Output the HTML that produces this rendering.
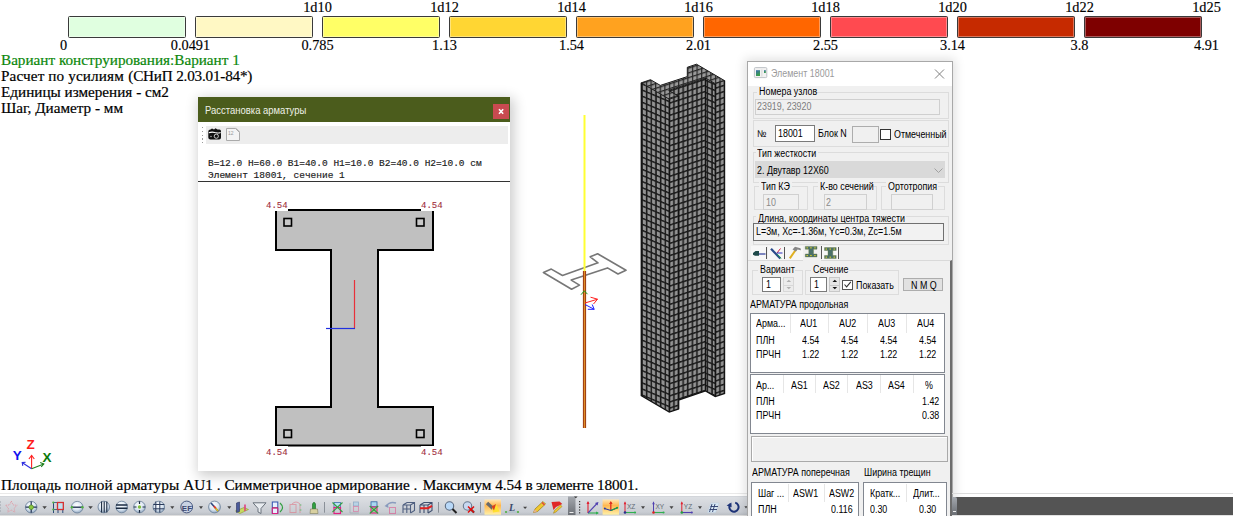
<!DOCTYPE html>
<html><head><meta charset="utf-8">
<style>
html,body{margin:0;padding:0;}
body{width:1233px;height:516px;overflow:hidden;background:#fff;position:relative;font-family:"Liberation Sans",sans-serif;}
.a{position:absolute;white-space:nowrap;}
.sr{font-family:"Liberation Serif",serif;font-size:15.2px;line-height:16px;color:#000;-webkit-text-stroke:0.2px currentColor;}
.lg{font-family:"Liberation Serif",serif;font-size:14.3px;line-height:14px;color:#000;-webkit-text-stroke:0.15px #000;}
.bx{position:absolute;top:16px;width:116px;height:20px;border:1px solid #3a3a3a;border-radius:1.5px;box-shadow:inset 0 0 0 1px rgba(255,255,255,.35);}
.ui{font-family:"Liberation Sans",sans-serif;font-size:10px;line-height:11px;color:#000;transform-origin:0 0;transform:scaleX(.89);margin-top:.5px;}
.mono{font-family:"Liberation Mono",monospace;font-weight:normal;font-size:9.5px;line-height:10px;color:#1a1a1a;-webkit-text-stroke:0.15px #1a1a1a;}
</style></head><body>

<!-- legend -->
<div class="bx" style="left:68px;background:#e0ffe0"></div>
<div class="bx" style="left:195px;background:#fff8c4"></div>
<div class="bx" style="left:322px;background:#ffff66"></div>
<div class="bx" style="left:449px;background:#ffd633"></div>
<div class="bx" style="left:576px;background:#ffa21f"></div>
<div class="bx" style="left:703px;background:#ff6600"></div>
<div class="bx" style="left:830px;background:#ff4a50"></div>
<div class="bx" style="left:957px;background:#c62a00"></div>
<div class="bx" style="left:1084px;background:#7e0000"></div>

<div class="a lg" style="left:317.5px;top:-0.5px;transform:translateX(-50%)">1d10</div>
<div class="a lg" style="left:444.5px;top:-0.5px;transform:translateX(-50%)">1d12</div>
<div class="a lg" style="left:571.5px;top:-0.5px;transform:translateX(-50%)">1d14</div>
<div class="a lg" style="left:698.5px;top:-0.5px;transform:translateX(-50%)">1d16</div>
<div class="a lg" style="left:825.5px;top:-0.5px;transform:translateX(-50%)">1d18</div>
<div class="a lg" style="left:952.5px;top:-0.5px;transform:translateX(-50%)">1d20</div>
<div class="a lg" style="left:1079.5px;top:-0.5px;transform:translateX(-50%)">1d22</div>
<div class="a lg" style="left:1206.5px;top:-0.5px;transform:translateX(-50%)">1d25</div>

<div class="a lg" style="left:63.5px;top:38.3px;transform:translateX(-50%)">0</div>
<div class="a lg" style="left:190.5px;top:38.3px;transform:translateX(-50%)">0.0491</div>
<div class="a lg" style="left:317.5px;top:38.3px;transform:translateX(-50%)">0.785</div>
<div class="a lg" style="left:444.5px;top:38.3px;transform:translateX(-50%)">1.13</div>
<div class="a lg" style="left:571.5px;top:38.3px;transform:translateX(-50%)">1.54</div>
<div class="a lg" style="left:698.5px;top:38.3px;transform:translateX(-50%)">2.01</div>
<div class="a lg" style="left:825.5px;top:38.3px;transform:translateX(-50%)">2.55</div>
<div class="a lg" style="left:952.5px;top:38.3px;transform:translateX(-50%)">3.14</div>
<div class="a lg" style="left:1079.5px;top:38.3px;transform:translateX(-50%)">3.8</div>
<div class="a lg" style="left:1206.5px;top:38.3px;transform:translateX(-50%)">4.91</div>

<div class="a sr" style="left:1px;top:51.5px;color:#0a870a">Вариант конструирования:Вариант 1</div>
<div class="a sr" style="left:1px;top:67.5px;letter-spacing:0.13px">Расчет по усилиям</div>
<div class="a sr" style="left:128.3px;top:67.5px;letter-spacing:-0.2px">(СНиП 2.03.01-84*)</div>
<div class="a sr" style="left:1px;top:83.5px">Единицы измерения - см2</div>
<div class="a sr" style="left:1px;top:99.5px">Шаг, Диаметр - мм</div>

<div class="a sr" style="left:1px;top:476.6px;font-size:15.27px;letter-spacing:0.08px">Площадь полной арматуры</div>
<div class="a sr" style="left:183.3px;top:476.6px;font-size:15.27px">AU1 . Симметричное</div>
<div class="a sr" style="left:325.5px;top:476.6px;font-size:15.27px">армирование .</div>
<div class="a sr" style="left:422.8px;top:476.6px;font-size:15.27px;letter-spacing:-0.06px">Максимум 4.54 в</div>
<div class="a sr" style="left:536px;top:476.6px;font-size:15.27px;letter-spacing:-0.16px">элементе 18001.</div>


<!-- 3D view -->
<svg class="a" style="left:0;top:0" width="1233" height="516" viewBox="0 0 1233 516">
 <defs>
  <pattern id="pA" patternUnits="userSpaceOnUse" width="4.67" height="6.1" patternTransform="translate(641.3,82.8) skewY(23)">
   <rect width="4.67" height="6.1" fill="#939393"/>
   <rect width="4.67" height="1.6" fill="#1a1a1a"/>
   <rect width="1.45" height="6.1" fill="#1a1a1a"/>
   <rect x="3.8" y="1.6" width="0.87" height="4.5" fill="#808080"/>
  </pattern>
  <pattern id="pC" patternUnits="userSpaceOnUse" width="4.6" height="6.1" patternTransform="translate(668.7,90.4) skewY(-18)">
   <rect width="4.6" height="6.1" fill="#939393"/>
   <rect width="4.6" height="1.6" fill="#1a1a1a"/>
   <rect width="1.45" height="6.1" fill="#1a1a1a"/>
   <rect x="3.7" y="1.6" width="0.9" height="4.5" fill="#808080"/>
  </pattern>
  <pattern id="pT" patternUnits="userSpaceOnUse" width="4.6" height="4.8" patternTransform="translate(641.3,82.8) skewY(-18)">
   <rect width="4.6" height="4.8" fill="#9a9a9a"/>
   <rect width="4.6" height="1.3" fill="#262626"/>
   <rect width="1.2" height="4.8" fill="#262626"/>
  </pattern>
 </defs>
 <polygon points="668.7,90.4 705.5,78.0 705.5,390.9 668.7,403.3" fill="url(#pC)"/>
 <polygon points="705.5,78.0 715.3,83.7 715.3,396.6 705.5,390.9" fill="url(#pA)"/>
 <polygon points="715.3,83.7 724.5,80.6 724.5,393.5 715.3,396.6" fill="url(#pC)"/>
 <polygon points="669.3,99.2 678.5,96.1 678.5,409.0 669.3,412.1" fill="url(#pC)"/>
 <polygon points="641.3,82.8 669.3,99.2 669.3,412.1 641.3,395.7" fill="url(#pA)"/>
 <polygon points="641.3,82.8 669.3,99.2 678.5,96.1 668.7,90.4 705.5,78.0 715.3,83.7 724.5,80.6 696.5,64.2 687.3,67.3 687.3,76.6 660.3,85.4 650.5,79.7" fill="url(#pT)" stroke="#1c1c1c" stroke-width="1"/>
 <g stroke="#141414" stroke-width="1.4" fill="none">
  <polyline points="641.3,82.8 641.3,395.7 669.3,412.1 678.5,409 678.5,400.0 705.5,390.9 715.3,396.6 724.5,393.5 724.5,80.6"/>
  <line x1="669.3" y1="99.2" x2="669.3" y2="412.1"/>
  <line x1="678.5" y1="96.1" x2="678.5" y2="409"/>
  <line x1="705.5" y1="78" x2="705.5" y2="390.9"/>
  <line x1="715.3" y1="83.7" x2="715.3" y2="396.6"/>
 </g>

 <!-- gray I outline -->
 <polygon points="543.4,272.5 551.3,269.1 562.5,275.5 598,262.8 590.2,256.8 597.6,253.7 626,270.3 618,274 607.5,267.9 571.2,280.1 579.5,285.1 571.6,289.2" fill="none" stroke="#777" stroke-width="1.6" stroke-linejoin="round"/>
 <!-- vertical element line -->
 <line x1="584.5" y1="115" x2="584.5" y2="272" stroke="#ffff33" stroke-width="2"/>
 <line x1="584.5" y1="271" x2="584.5" y2="428" stroke="#9c3a12" stroke-width="3.2"/>
 <line x1="584.5" y1="271" x2="584.5" y2="428" stroke="#e0902a" stroke-width="1.2"/>
 <!-- local axes -->
 <polyline points="581,294.7 584.3,290.8 587.5,294.2" fill="none" stroke="#1a9a1a" stroke-width="1"/>
 <line x1="585" y1="303" x2="597.5" y2="299.2" stroke="#ff2020" stroke-width="1"/>
 <polyline points="590.5,297.2 597.5,299.2 593.5,304" fill="none" stroke="#ff2020" stroke-width="1"/>
 <line x1="585" y1="304.5" x2="594.2" y2="309.3" stroke="#2020ff" stroke-width="1"/>
 <polyline points="587.8,309.3 594.2,309.3 592.2,304.5" fill="none" stroke="#2020ff" stroke-width="1"/>

 <!-- global axes icon -->
 <line x1="31.6" y1="468.8" x2="31.6" y2="455.5" stroke="#ff2020" stroke-width="1.1"/>
 <polyline points="28.9,459 31.6,455.4 34.3,459" fill="none" stroke="#ff2020" stroke-width="1.1"/>
 <line x1="31.6" y1="468.8" x2="22.4" y2="462.7" stroke="#3030e0" stroke-width="1.1"/>
 <polyline points="22.8,465.8 22.2,462.6 25.6,462.3" fill="none" stroke="#3030e0" stroke-width="1.1"/>
 <line x1="31.6" y1="468.8" x2="43.8" y2="464" stroke="#208020" stroke-width="1.1"/>
 <polyline points="40.2,462.4 43.8,464 41.2,466.8" fill="none" stroke="#208020" stroke-width="1.1"/>
</svg>
<div class="a" style="left:26.5px;top:437.6px;font:bold 13.5px/14px 'Liberation Sans',sans-serif;color:#ff1a1a">Z</div>
<div class="a" style="left:12.8px;top:448.6px;font:bold 13.5px/14px 'Liberation Sans',sans-serif;color:#1010ee">Y</div>
<div class="a" style="left:42.5px;top:450.6px;font:bold 13.5px/14px 'Liberation Sans',sans-serif;color:#0b7a0b">X</div>

<!-- DIALOG -->
<div id="dlg" class="a" style="left:198px;top:97px;width:312px;height:374px;background:#fff;box-shadow:2px 3px 12px 2px rgba(0,0,0,.2);"></div>
<div class="a" style="left:198px;top:97px;width:312px;height:25px;background:#4b5c1c"></div>
<div class="a ui" style="left:205px;top:104.1px;color:#eef0e6;font-size:10.3px;transform:scaleX(.92)">Расстановка арматуры</div>
<div class="a" style="left:493.3px;top:104px;width:15.4px;height:15px;background:#c94a50"></div>
<svg class="a" style="left:493px;top:104px" width="16" height="15" viewBox="0 0 16 15"><path d="M6 5.3 L10.2 9.8 M10.2 5.3 L6 9.8" stroke="#fff" stroke-width="1.6"/></svg>
<div class="a" style="left:205.5px;top:125.5px;width:302.5px;height:18.3px;background:#ededed"></div>

<div class="a mono" style="left:208px;top:158.8px">B=12.0 H=60.0 B1=40.0 H1=10.0 B2=40.0 H2=10.0 см</div>
<div class="a mono" style="left:208px;top:170.8px">Элемент 18001, сечение 1</div>
<div class="a" style="left:198px;top:180.5px;width:312px;height:1.5px;background:#333"></div>


<!-- dialog toolbar icons -->
<div class="a" style="left:201.5px;top:127px;width:1.5px;height:17px;background:repeating-linear-gradient(#9a9a9a 0 1.2px,transparent 1.2px 3.8px)"></div>
<svg class="a" style="left:204px;top:124px" width="40" height="20" viewBox="204 124 40 20">
 <path d="M208.3 131.5 Q208.3 129.8 210.5 129.6 L212 128.6 L214 129.4 L215.5 128.3 L217.5 129.4 L219.5 129.6 Q221 129.8 221 131.5 V137.5 Q221 139.5 219 139.5 H210.5 Q208.3 139.5 208.3 137.5 Z" fill="#111"/>
 <path d="M208.8 132.8 Q212 131.6 214.8 132.6 Q218 133.6 220.6 132.4" fill="none" stroke="#fff" stroke-width="1.1"/>
 <circle cx="216.3" cy="136.2" r="2.1" fill="none" stroke="#ddd" stroke-width="0.9"/>
 <circle cx="211" cy="136.5" r="0.7" fill="#ccc"/>
 <path d="M227.3 128.4 H236.2 L239.4 131.6 V139.4 H227.3 Z" fill="#f3f3f3" stroke="#b0b0b0" stroke-width="0.9"/>
 <path d="M236.2 128.4 V131.6 H239.4" fill="none" stroke="#c0c0c0" stroke-width="0.7"/>
 <text x="229" y="134.5" font-family="Liberation Sans" font-size="6" fill="#999">12</text>
</svg>
<svg class="a" style="left:226px;top:128px" width="14" height="13" viewBox="0 0 14 13">
 <path d="M0.5 0.5 H9.5 L13.5 4.5 V12.5 H0.5 Z" fill="#f4f4f4" stroke="#aaa"/>
 <text x="2" y="7" font-size="5" fill="#999" font-family="Liberation Sans">12</text>
</svg>

<!-- I-section -->
<svg class="a" style="left:0;top:0" width="1233" height="516" viewBox="0 0 1233 516">
 <path d="M276 210 H433 V250 H378 V407 H433 V445.5 H276 V407 H331 V250 H276 Z" fill="#c0c0c0" stroke="#000" stroke-width="2"/>
 <rect x="284" y="218.5" width="7.5" height="7.5" fill="#c8c8c8" stroke="#000" stroke-width="1.6"/>
 <rect x="416.5" y="218.5" width="7.5" height="7.5" fill="#c8c8c8" stroke="#000" stroke-width="1.6"/>
 <rect x="284" y="430" width="7.5" height="7.5" fill="#c8c8c8" stroke="#000" stroke-width="1.6"/>
 <rect x="416.5" y="430" width="7.5" height="7.5" fill="#c8c8c8" stroke="#000" stroke-width="1.6"/>
 <line x1="354.5" y1="280" x2="354.5" y2="328.5" stroke="#e8303a" stroke-width="1.2"/>
 <line x1="326" y1="328.5" x2="355" y2="328.5" stroke="#2030e0" stroke-width="1.2"/>
</svg>
<div class="a mono" style="left:266px;top:200.5px;color:#a02c3c;-webkit-text-stroke:0.1px #a02c3c;font-size:9px;background:#fff">4.54</div>
<div class="a mono" style="left:421px;top:200.5px;color:#a02c3c;-webkit-text-stroke:0.1px #a02c3c;font-size:9px;background:#fff">4.54</div>
<div class="a mono" style="left:266px;top:445.5px;padding-top:2px;color:#a02c3c;-webkit-text-stroke:0.1px #a02c3c;font-size:9px;background:#fff">4.54</div>
<div class="a mono" style="left:421px;top:445.5px;padding-top:2px;color:#a02c3c;-webkit-text-stroke:0.1px #a02c3c;font-size:9px;background:#fff">4.54</div>



<!-- BOTTOM TOOLBAR -->
<div class="a" style="left:0;top:493px;width:748px;height:1px;background:#e9e9e9"></div>
<div class="a" style="left:0;top:496px;width:748px;height:20px;background:linear-gradient(#c9ccd1 0,#dde0e4 1px,#d6d9de 6px,#c9cdd3 16px,#bcc0c6 18.6px,#dcdcdc 18.7px,#e0e0e0 20px)"></div>
<div class="a" style="left:952px;top:493px;width:281px;height:1px;background:#dcdcdc;z-index:5"></div>
<div class="a" style="left:952px;top:497px;width:281px;height:17.6px;background:#545454;z-index:5"></div>
<div class="a" style="left:951.8px;top:497px;width:5.6px;height:17.6px;background:linear-gradient(#a4a8ae,#6a6e74);border-top-right-radius:2px;z-index:6"></div><div class="a" style="left:952.5px;top:511px;width:3px;height:0.8px;background:#eee;z-index:7"></div>
<div class="a" style="left:952px;top:514.6px;width:281px;height:1.4px;background:#e2e2e2;z-index:5"></div>
<svg class="a" style="left:0;top:493px" width="748" height="23" viewBox="0 493 748 23">
 <defs>
  <radialGradient id="gb" cx="45%" cy="35%" r="65%"><stop offset="0" stop-color="#ffffff"/><stop offset="0.6" stop-color="#dbe6f2"/><stop offset="1" stop-color="#8fa6c0"/></radialGradient>
  <linearGradient id="hl" x1="0" y1="0" x2="0" y2="1"><stop offset="0" stop-color="#ffe8b8"/><stop offset="0.4" stop-color="#ffb850"/><stop offset="1" stop-color="#fff0a8"/></linearGradient><linearGradient id="chv" x1="0" y1="0" x2="0" y2="1"><stop offset="0" stop-color="#a4a8ae"/><stop offset="1" stop-color="#6c7076"/></linearGradient>
 </defs>
 <!-- grip -->
 <g fill="#9aa0a8"><rect x="0" y="501.5" width="1" height="1"/><rect x="0" y="504.5" width="1" height="1"/><rect x="0" y="507.5" width="1" height="1"/><rect x="0" y="510.5" width="1" height="1"/></g>
 <!-- star faded -->
 <polygon points="11.3,501.0 13.0,504.9 17.2,505.3 14.1,508.1 14.9,512.2 11.3,510.1 7.7,512.2 8.5,508.1 5.4,505.3 9.6,504.9" fill="none" stroke="#e09aa4" stroke-width="0.9" stroke-dasharray="1.2,0.8"/>
 <!-- circle cross green -->
 <circle cx="31.2" cy="507.2" r="5.8" fill="url(#gb)" stroke="#6a7f98" stroke-width="0.8"/>
 <path d="M25.6 507.2 H36.8 M31.2 501.6 V512.8" stroke="#203050" stroke-width="1.2"/>
 <circle cx="31.2" cy="507.2" r="2.3" fill="#8cc840" stroke="#3a7a20" stroke-width="0.6"/>
 <path d="M42.4 506.3 H46.8 L44.6 509 Z" fill="#444"/>
 <!-- red/green grid -->
 <path d="M53.5 502.5 V513 M58 502.5 V513 M62.8 502.5 V513" stroke="#2a4a7a" stroke-width="1"/>
 <path d="M53 502.5 H64 M53 509.5 H64" stroke="#3a5a8a" stroke-width="0.9"/>
 <rect x="57.5" y="502.5" width="5.8" height="7" fill="#bfe0f0" stroke="#d83030" stroke-width="1.3"/>
 <circle cx="53.3" cy="502.5" r="1.1" fill="#50b040"/><circle cx="53.3" cy="509.5" r="1.1" fill="#50b040"/>
 <!-- circle with line -->
 <circle cx="77.2" cy="507.2" r="5.8" fill="url(#gb)" stroke="#6a7f98" stroke-width="0.8"/>
 <path d="M71.5 507.2 H82.8" stroke="#1a2a4a" stroke-width="1.3"/>
 <circle cx="71.9" cy="507.2" r="1.2" fill="#50b040"/><circle cx="82.4" cy="507.2" r="1.2" fill="#50b040"/>
 <path d="M88.3 506.3 H92.8 L90.5 509 Z" fill="#444"/>
 <!-- circle vertical lines -->
 <circle cx="103.8" cy="507" r="5.8" fill="url(#gb)" stroke="#6a7f98" stroke-width="0.8"/>
 <path d="M101.6 501.5 V512.5 M104.2 501.5 V512.5 M106.8 501.5 V512.5" stroke="#1a2a40" stroke-width="1.1"/>
 <!-- circle horizontal lines -->
 <circle cx="121.7" cy="507" r="5.8" fill="url(#gb)" stroke="#6a7f98" stroke-width="0.8"/>
 <path d="M116 505 H127.4 M116 508.2 H127.4" stroke="#1a2a40" stroke-width="1.4"/>
 <!-- circle green dot -->
 <circle cx="139.5" cy="507" r="5.8" fill="url(#gb)" stroke="#6a7f98" stroke-width="0.8"/>
 <path d="M133.7 507 H136.5 M142.5 507 H145.3 M139.5 501.2 V504 M139.5 510 V512.8" stroke="#1a2a40" stroke-width="1.2"/>
 <circle cx="139.5" cy="507" r="1.7" fill="#80c040"/>
 <!-- circle grid -->
 <circle cx="158.8" cy="507" r="5.8" fill="url(#gb)" stroke="#6a7f98" stroke-width="0.8"/>
 <path d="M155.8 501.5 V512.5 M159.8 501.5 V512.5 M153.3 504.5 H164.3 M153.3 508.8 H164.3" stroke="#2a3a5a" stroke-width="1"/>
 <path d="M170.3 506.3 H174.3 L172.3 509 Z" fill="#444"/>
 <!-- EF -->
 <circle cx="186.7" cy="507" r="5.9" fill="#c8d2e4" stroke="#4a5a80" stroke-width="1"/>
 <text x="181.8" y="510.6" font-family="Liberation Sans" font-weight="bold" font-size="8" fill="#3a4670">EF</text>
 <path d="M199 506.3 H203 L201 509 Z" fill="#444"/>
 <!-- compass -->
 <circle cx="214.5" cy="507" r="5.9" fill="url(#gb)" stroke="#6a7f98" stroke-width="0.8"/>
 <path d="M211 503 L218 511" stroke="#304a80" stroke-width="1.6"/>
 <path d="M214.5 507 L218 511" stroke="#e0c020" stroke-width="1.6"/>
 <path d="M213.8 506 L215.8 508.2" stroke="#e03030" stroke-width="1.6"/>
 <path d="M227.3 506.3 H231.3 L229.3 509 Z" fill="#444"/>
 <!-- plot icon -->
 <path d="M235.5 511 L240 513.5 L248.5 509.5 L244 507.5 Z" fill="#c8d860" stroke="#8a9a30" stroke-width="0.6"/>
 <path d="M236.5 503 L239.5 502 V511.5 L236.5 512.5 Z" fill="#4a5a9a" stroke="#2a3060" stroke-width="0.6"/>
 <path d="M245 504.5 V511" stroke="#e04080" stroke-width="1.6"/>
 <!-- funnel -->
 <path d="M253 502.8 H266 L261 508.5 V513.5 L258 512 V508.5 Z" fill="#e8ecf0" stroke="#6a727c" stroke-width="1"/>
 <!-- swap -->
 <rect x="272.3" y="502" width="5.5" height="11.5" fill="#e8f0ff" stroke="#3050b0" stroke-width="1"/>
 <path d="M272.3 507.8 H277.8" stroke="#702040" stroke-width="1"/>
 <path d="M272.3 508 H277.8 V513.5 H272.3 Z" fill="none" stroke="#e02080" stroke-width="1"/>
 <path d="M280 503 Q285 507.5 280 512" fill="none" stroke="#30a040" stroke-width="1.2"/>
 <!-- faded -->
 <g opacity="0.55"><rect x="290" y="504.5" width="6" height="8" fill="none" stroke="#e07080" stroke-width="1"/><path d="M292 504 Q296 500 300 504 V513" fill="none" stroke="#e07080" stroke-width="1"/><circle cx="300.5" cy="505" r="1" fill="#60b060"/><circle cx="300.5" cy="510" r="1" fill="#60b060"/></g>
 <!-- brush -->
 <path d="M312.5 504 Q314 500.5 315.5 504 V509 H312.5 Z" fill="#30a040" stroke="#1a6a20" stroke-width="0.6"/>
 <path d="M310.5 509 H317.5 L318 513.5 H310 Z" fill="#d8d0a0" stroke="#808060" stroke-width="0.6"/>
 <rect x="324" y="502" width="1" height="10.7" fill="#8a9098"/>
 <!-- x-grid pink -->
 <rect x="334" y="502.5" width="6.5" height="5" fill="#b8e0f0" stroke="#4070b0" stroke-width="0.8"/>
 <rect x="334" y="507.5" width="6.5" height="6" fill="none" stroke="#e02080" stroke-width="1.2"/>
 <path d="M332.5 502.5 L342.5 512 M342.5 502.5 L332.5 512" stroke="#30a040" stroke-width="1.1"/>
 <!-- faded column -->
 <g opacity="0.5"><path d="M350 503 V513 H359" fill="none" stroke="#8090a0" stroke-width="0.8"/><rect x="353.5" y="502" width="5" height="4" fill="#a0d0f0" stroke="#5080b0" stroke-width="0.8"/><rect x="353.5" y="506.5" width="5" height="5" fill="none" stroke="#e04080" stroke-width="0.8"/></g>
 <!-- x-grid 2 -->
 <rect x="371" y="501.8" width="6" height="5" fill="#a8d8f0" stroke="#3060a0" stroke-width="0.8"/>
 <rect x="371" y="507" width="6" height="6" fill="#a0d0a0" stroke="#e02080" stroke-width="1.1"/>
 <path d="M369.7 506 L378.2 513.5 M378.2 506 L369.7 513.5" stroke="#30a040" stroke-width="1.1"/>
 <!-- faded undo -->
 <g opacity="0.5"><path d="M386 506 Q390 501 396 503" fill="none" stroke="#4060a0" stroke-width="1.4"/><path d="M384.5 506 L388 504 L388.5 508 Z" fill="#4060a0"/><rect x="389.5" y="507.5" width="6" height="6" fill="none" stroke="#e04080" stroke-width="1"/></g>
 <!-- frame -->
 <path d="M403 505 L407 502.5 H414.5 V510.5 L410.5 513 M403 505 H410.5 V513 M403 505 V513 M406.8 505 V513 M410.5 505 L414.5 502.5 M403 509 H410.5" fill="none" stroke="#506080" stroke-width="1.1"/>
 <!-- frame red -->
 <path d="M420 505 L424 502.5 H432 V510.5 L428 513 M420 505 H428 V513 M420 505 V513 M424 505 V513 M428 505 L432 502.5" fill="none" stroke="#405070" stroke-width="1.1"/>
 <path d="M420 508.2 H428 L432 505.8" fill="none" stroke="#e02020" stroke-width="2"/>
 <rect x="438" y="502" width="1" height="10.7" fill="#8a9098"/>
 <!-- magnifier -->
 <circle cx="449.5" cy="506" r="4.2" fill="#b8d8f8" stroke="#5a6a80" stroke-width="1.1"/>
 <path d="M452.5 509 L456.5 513" stroke="#202020" stroke-width="2"/>
 <circle cx="467.5" cy="506" r="4.2" fill="#c8d8f0" stroke="#6a7a90" stroke-width="1.1"/>
 <path d="M470.5 509 L474 512.5" stroke="#202020" stroke-width="2"/>
 <path d="M468 506.5 L474 512.5 M474 506.5 L468 512.5" stroke="#e01010" stroke-width="1.5"/>
 <rect x="480" y="502" width="1" height="10.7" fill="#8a9098"/>
 <!-- highlighted flashlight -->
 <rect x="484.5" y="499.4" width="16.5" height="15.3" fill="url(#hl)"/>
 <path d="M487 503 L493 508.5" stroke="#6a6a6a" stroke-width="3.4"/>
 <path d="M492 507 L496.5 504.5 L499.5 511.5 L493 512.5 Z" fill="#ffe030"/>
 <path d="M491.5 506.5 L496 504 L494 510.5 Z" fill="#d84020"/>
 <!-- L icon -->
 <text x="509" y="510.5" font-family="Liberation Serif" font-style="italic" font-weight="bold" font-size="10" fill="#3a4a6a">L</text>
 <path d="M506 512 H518" stroke="#a0b8c8" stroke-width="0.8"/>
 <circle cx="506" cy="512" r="1.1" fill="#50b040"/><circle cx="518" cy="512" r="1.1" fill="#50b040"/>
 <path d="M523.1 506.8 H527.1 L525.1 509 Z" fill="#444"/>
 <!-- pencil -->
 <path d="M533.5 512.5 L535 509 L543 501.5 L545.5 504 L537.5 511.5 Z" fill="#f0c830" stroke="#9a7a10" stroke-width="0.7"/>
 <path d="M533.3 512.8 L534.8 509.3 L537 511.5 Z" fill="#e8b090"/>
 <path d="M542 502.5 L544.5 505" stroke="#e04040" stroke-width="1.2"/>
 <!-- red flag -->
 <path d="M551.5 502 L559.5 501.5 L562.3 504 L556 507 L553.5 510 Z" fill="#e02828"/>
 <path d="M553.5 513.2 L554.5 510.5 L560.5 505 L562 506.5 L556 512 Z" fill="#f0c830" stroke="#9a7a10" stroke-width="0.5"/>
 <!-- toolbar end -->
 <rect x="568" y="496.5" width="7.5" height="18.5" fill="url(#chv)"/>
 <path d="M574 496.5 H577.6 L575.8 498.3 Z" fill="#333"/>
 <rect x="569.5" y="512" width="4" height="1" fill="#eee"/>
 <g fill="#333"><rect x="579" y="501" width="1.2" height="1.2"/><rect x="579" y="503.8" width="1.2" height="1.2"/><rect x="579" y="506.6" width="1.2" height="1.2"/><rect x="579" y="509.4" width="1.2" height="1.2"/><rect x="579" y="512.2" width="1.2" height="1.2"/></g>
 <!-- axis icon -->
 <path d="M588 513 V502" stroke="#e02030" stroke-width="1.1"/><path d="M586.5 504 L588 501 L589.5 504 Z" fill="#e02030"/>
 <path d="M588 513 H598" stroke="#30b050" stroke-width="1.1"/><path d="M596 511.5 L599 513 L596 514.5 Z" fill="#30b050"/>
 <path d="M588 513 L597.5 503" stroke="#5040b0" stroke-width="1.1"/><path d="M595 503 L598.5 502 L597.5 505.5 Z" fill="#5040b0"/>
 <!-- highlighted axis -->
 <rect x="602.6" y="499.4" width="16.4" height="15.3" fill="url(#hl)"/>
 <path d="M610.8 510 V502" stroke="#e03020" stroke-width="1.3"/><path d="M609 504 L610.8 501 L612.6 504 Z" fill="#e03020"/>
 <path d="M604.5 508.5 L610.8 510.5 L617 508" fill="none" stroke="#2a3aa0" stroke-width="1.1"/>
 <path d="M611 510.5 L617.5 507.5" stroke="#20a040" stroke-width="1.3"/>
 <circle cx="604.8" cy="508.5" r="1" fill="#2a3aa0"/><circle cx="617.2" cy="507.8" r="1" fill="#20a040"/>
 <!-- XZ -->
 <path d="M625 512.5 V502.5" stroke="#e02030" stroke-width="1"/><path d="M623.7 504.3 L625 501.3 L626.3 504.3 Z" fill="#e02030"/>
 <path d="M625 512.5 H635" stroke="#30b050" stroke-width="1.1"/><circle cx="635" cy="512.5" r="1.1" fill="#30b050"/>
 <circle cx="625" cy="512.5" r="1.3" fill="#2a3090"/>
 <text x="627" y="508.5" font-family="Liberation Sans" font-size="6.5" fill="#606a74">XZ</text>
 <path d="M641 506.3 H645 L643 509 Z" fill="#444"/>
 <!-- XY -->
 <path d="M653.5 512.5 V502.5" stroke="#5040b0" stroke-width="1"/><path d="M652.2 504.3 L653.5 501.3 L654.8 504.3 Z" fill="#5040b0"/>
 <path d="M653.5 512.5 H663.5" stroke="#30b050" stroke-width="1.1"/><circle cx="663.5" cy="512.5" r="1.1" fill="#30b050"/>
 <circle cx="653.5" cy="512.5" r="1.3" fill="#e02020"/>
 <text x="655.5" y="508.5" font-family="Liberation Sans" font-size="6.5" fill="#606a74">XY</text>
 <path d="M669.5 506.3 H673.5 L671.5 509 Z" fill="#444"/>
 <!-- YZ -->
 <path d="M681.8 512.5 V502.5" stroke="#e02030" stroke-width="1"/><path d="M680.5 504.3 L681.8 501.3 L683.1 504.3 Z" fill="#e02030"/>
 <path d="M681.8 512.5 H691.8" stroke="#5040b0" stroke-width="1.1"/><circle cx="691.8" cy="512.5" r="1.1" fill="#5040b0"/>
 <circle cx="681.8" cy="512.5" r="1.3" fill="#20a040"/>
 <text x="683.8" y="508.5" font-family="Liberation Sans" font-size="6.5" fill="#606a74">YZ</text>
 <path d="M698 506.3 H702 L700 509 Z" fill="#444"/>
 <!-- grid parallelogram -->
 <path d="M707.5 512.5 L711 503 H719 L715.5 512.5 Z" fill="#d8e8f4" stroke="#c0d0e0" stroke-width="0.6"/>
 <path d="M709.5 509.5 H717 M710.5 506.5 H718 M712 504 L709.5 512 M715 504 L712.5 512" stroke="#2a3a6a" stroke-width="0.9"/>
 <!-- rotate -->
 <path d="M735.2 502.6 A4.6 4.6 0 1 1 730.5 504" fill="none" stroke="#1e3478" stroke-width="2"/>
 <path d="M726.6 505.4 L731.4 502.4 L731.6 507.2 Z" fill="#1e3478"/>
 <path d="M744.4 506.3 H747.5 L746 508.5 Z" fill="#444"/>
</svg>

<!-- RIGHT PANEL -->
<div class="a" style="left:747px;top:61px;width:204px;height:460px;background:#f0f0f0;border:1px solid #a8a8a8;box-shadow:0 0 10px 2px rgba(0,0,0,.13)"></div>
<div class="a" style="left:748px;top:62px;width:204px;height:24px;background:#fff"></div>
<svg class="a" style="left:750px;top:64px" width="22" height="18" viewBox="750 64 22 18">
 <defs><linearGradient id="ig" x1="0" y1="0" x2="0.4" y2="1"><stop offset="0" stop-color="#3a6ab0"/><stop offset="1" stop-color="#3aa048"/></linearGradient></defs>
 <rect x="754.4" y="67.6" width="12.4" height="10" rx="1" fill="#f2f2f2" stroke="#b8bcc2" stroke-width="0.9"/>
 <rect x="756" y="70.2" width="4" height="5.8" fill="url(#ig)"/>
 <rect x="761.5" y="69.5" width="0.8" height="7" fill="#d0d0d0"/>
 <rect x="764" y="70.2" width="1.8" height="2.8" fill="url(#ig)"/>
</svg>
<div class="a ui" style="left:771px;top:67.6px;color:#9a9a9a">Элемент 18001</div>
<svg class="a" style="left:934px;top:68.5px" width="11" height="10" viewBox="0 0 11 10"><path d="M1 0.5 L10 9.5 M10 0.5 L1 9.5" stroke="#808080" stroke-width="1"/></svg>

<!-- group 1 -->
<div class="a" style="left:752.5px;top:91.5px;width:194px;height:25px;border:1px solid #dcdcdc"></div>
<div class="a" style="left:757px;top:86px;width:58px;height:10px;background:#f0f0f0"></div>
<div class="a ui" style="left:759.4px;top:85.7px">Номера узлов</div>
<div class="a" style="left:754.5px;top:99px;width:183.8px;height:14px;border:1px solid #cfcfcf;background:#f0f0f0"></div>
<div class="a ui" style="left:757px;top:100.9px;color:#7d7d7d">23919, 23920</div>

<!-- group 2 -->
<div class="a" style="left:752.5px;top:120px;width:194px;height:25px;border:1px solid #dcdcdc"></div>
<div class="a ui" style="left:757px;top:127.6px">№</div>
<div class="a" style="left:774.5px;top:125.3px;width:38px;height:15px;border:1px solid #7a7a7a;background:#fff"></div>
<div class="a ui" style="left:777.5px;top:127.6px">18001</div>
<div class="a ui" style="left:818.4px;top:127.6px">Блок N</div>
<div class="a" style="left:852px;top:126.2px;width:25px;height:14.5px;border:1px solid #adadad;background:#f0f0f0"></div>
<div class="a" style="left:880px;top:128.7px;width:9px;height:9.5px;border:1px solid #333;background:#fff"></div>
<div class="a ui" style="left:893.7px;top:128.4px">Отмеченный</div>

<!-- group 3 -->
<div class="a" style="left:752.5px;top:152px;width:194px;height:29px;border:1px solid #dcdcdc"></div>
<div class="a" style="left:756px;top:147px;width:62px;height:10px;background:#f0f0f0"></div>
<div class="a ui" style="left:757.4px;top:147.5px">Тип жесткости</div>
<div class="a" style="left:754.6px;top:161.3px;width:190.3px;height:17px;background:#d9d9d9"></div>
<div class="a ui" style="left:757.4px;top:164.9px">2. Двутавр 12Х60</div>
<svg class="a" style="left:933.5px;top:168px" width="9" height="6" viewBox="0 0 9 6"><path d="M0.5 0.5 L4.5 4.5 L8.5 0.5" fill="none" stroke="#a0a0a0" stroke-width="1"/></svg>

<!-- groups 4 -->
<div class="a" style="left:753.5px;top:185.8px;width:52.3px;height:22.5px;border:1px solid #dcdcdc"></div>
<div class="a" style="left:759px;top:181px;width:33px;height:9px;background:#f0f0f0"></div>
<div class="a ui" style="left:761px;top:180px">Тип КЭ</div>
<div class="a" style="left:763px;top:194px;width:34.3px;height:13.6px;border:1px solid #d0d0d0;background:#f0f0f0"></div>
<div class="a ui" style="left:766px;top:196px;color:#8a8a8a">10</div>

<div class="a" style="left:813.2px;top:185.8px;width:61.4px;height:22.5px;border:1px solid #dcdcdc"></div>
<div class="a" style="left:818px;top:181px;width:54px;height:9px;background:#f0f0f0"></div>
<div class="a ui" style="left:819.6px;top:180px">К-во сечений</div>
<div class="a" style="left:823.5px;top:194px;width:41.1px;height:13.6px;border:1px solid #d0d0d0;background:#f0f0f0"></div>
<div class="a ui" style="left:826px;top:196px;color:#8a8a8a">2</div>

<div class="a" style="left:880.5px;top:185.8px;width:62px;height:22.5px;border:1px solid #dcdcdc"></div>
<div class="a" style="left:886px;top:181px;width:52px;height:9px;background:#f0f0f0"></div>
<div class="a ui" style="left:888px;top:180px">Ортотропия</div>
<div class="a" style="left:890.5px;top:194px;width:40.5px;height:14.3px;border:1px solid #d0d0d0;background:#f0f0f0"></div>

<div class="a" style="left:752.5px;top:216px;width:194px;height:27px;border:1px solid #dcdcdc"></div>
<div class="a" style="left:756px;top:212px;width:150px;height:9px;background:#f0f0f0"></div>
<div class="a ui" style="left:758px;top:212px">Длина, координаты центра тяжести</div>
<div class="a" style="left:753px;top:222.5px;width:189.4px;height:16.5px;border:1px solid #707070;background:#f2f2f2"></div>
<div class="a ui" style="left:755.5px;top:225.2px">L=3м, Xc=-1.36м, Yc=0.3м, Zc=1.5м</div>


<!-- tabs -->
<div class="a" style="left:748px;top:259.5px;width:202px;height:260px;background:#f0f0f0;border-top:1px solid #d9d9d9;border-right:2px solid #6d6d6d"></div>
<div class="a" style="left:750.5px;top:246px;width:16px;height:13.5px;background:#f7f7f7"></div>
<div class="a" style="left:766px;top:247px;width:1.2px;height:12px;background:#555"></div>
<div class="a" style="left:767.5px;top:246px;width:16.5px;height:13.5px;background:#f7f7f7"></div>
<div class="a" style="left:783.5px;top:247px;width:1.2px;height:12px;background:#555"></div>
<div class="a" style="left:785px;top:246px;width:17.5px;height:13.5px;background:#f7f7f7"></div>
<div class="a" style="left:803px;top:244.5px;width:17.5px;height:16px;background:#f0f0f0"></div>
<div class="a" style="left:820.5px;top:246px;width:1.2px;height:13px;background:#555"></div>
<div class="a" style="left:822px;top:246px;width:16px;height:13.5px;background:#f7f7f7"></div>
<div class="a" style="left:837.5px;top:247px;width:1.2px;height:12px;background:#555"></div>
<svg class="a" style="left:750px;top:245px" width="90" height="15" viewBox="750 245 90 15">
 <!-- tab1 plug -->
 <path d="M753 253 L755.5 251 L759 251 L759 255.8 L755 255.8 L753 254.8 Z" fill="#1f4a4a"/>
 <line x1="759" y1="254" x2="765.5" y2="254" stroke="#2a3a9a" stroke-width="1.2"/>
 <!-- tab2 -->
 <line x1="771" y1="248.8" x2="780.3" y2="258.5" stroke="#2a4a8a" stroke-width="2.2"/>
 <line x1="777" y1="253" x2="780.5" y2="248.5" stroke="#d02040" stroke-width="1"/>
 <line x1="777" y1="253" x2="782.5" y2="253" stroke="#3030c0" stroke-width="1"/>
 <line x1="777" y1="254" x2="781" y2="258.5" stroke="#20a050" stroke-width="1"/>
 <!-- tab3 hammer -->
 <line x1="789.8" y1="258.4" x2="796" y2="249.5" stroke="#e0b020" stroke-width="2"/>
 <path d="M792.5 249.5 L795 246.8 L800.5 248.3 L801 250.2 L797.5 249.5 L796 251.5 Z" fill="#888"/>
 <!-- tab4 I -->
 <path d="M805.3 246.4 H817 V249.2 H813.5 V254 H817 V256.9 H805.3 V254 H808.8 V249.2 H805.3 Z" fill="#4a7068" stroke="#6a7a40" stroke-width="0.4"/>
 <g fill="#f0e020"><rect x="806.5" y="247.3" width="1.3" height="1.1"/><rect x="810.3" y="247.3" width="1.3" height="1.1"/><rect x="814.3" y="247.3" width="1.3" height="1.1"/><rect x="806.5" y="255" width="1.3" height="1.1"/><rect x="810.3" y="255" width="1.3" height="1.1"/><rect x="814.3" y="255" width="1.3" height="1.1"/></g>
 <!-- tab5 I framed -->
 <path d="M824.5 247.6 H836.2 V250.5 H832.8 V255.5 H836.2 V258.6 H824.5 V255.5 H828 V250.5 H824.5 Z" fill="#4a7068" stroke="#6a7a40" stroke-width="0.4"/>
 <g fill="#f0e020"><rect x="825.6" y="248.5" width="1.3" height="1.1"/><rect x="829.6" y="248.5" width="1.3" height="1.1"/><rect x="833.6" y="248.5" width="1.3" height="1.1"/><rect x="825.6" y="256.6" width="1.3" height="1.1"/><rect x="829.6" y="256.6" width="1.3" height="1.1"/><rect x="833.6" y="256.6" width="1.3" height="1.1"/></g>
</svg>

<!-- Вариант / Сечение -->
<div class="a" style="left:752.4px;top:269.7px;width:49px;height:23.5px;border:1px solid #dcdcdc"></div>
<div class="a" style="left:758px;top:264px;width:37px;height:9px;background:#f0f0f0"></div>
<div class="a ui" style="left:760px;top:263.5px">Вариант</div>
<div class="a" style="left:762.3px;top:277px;width:16.4px;height:13.3px;border:1px solid #7a7a7a;background:#fff"></div>
<div class="a ui" style="left:765.5px;top:278.7px">1</div>
<div class="a" style="left:783.2px;top:277.2px;width:9.1px;height:12.6px;border:1px solid #d8d8d8;background:#ececec"></div>
<div class="a" style="left:784px;top:284.5px;width:9px;height:1px;background:#d8d8d8"></div>
<svg class="a" style="left:783px;top:277px" width="12" height="15" viewBox="0 0 12 15"><path d="M3.5 5 L5.8 2.8 L8.1 5 Z M3.5 10 L5.8 12.2 L8.1 10 Z" fill="#b0b0b0"/></svg>

<div class="a" style="left:805.3px;top:269.5px;width:91.8px;height:23.5px;border:1px solid #dcdcdc"></div>
<div class="a" style="left:811px;top:264px;width:38px;height:9px;background:#f0f0f0"></div>
<div class="a ui" style="left:812.9px;top:263.5px">Сечение</div>
<div class="a" style="left:810px;top:277px;width:14.8px;height:13.3px;border:1px solid #7a7a7a;background:#fff"></div>
<div class="a ui" style="left:813.5px;top:278.7px">1</div>
<div class="a" style="left:829.2px;top:277.2px;width:9px;height:12.6px;border:1px solid #c8c8c8;background:#e6e6e6"></div>
<div class="a" style="left:830px;top:284.5px;width:9px;height:1px;background:#c8c8c8"></div>
<svg class="a" style="left:829px;top:277px" width="12" height="15" viewBox="0 0 12 15"><path d="M3.5 5 L5.8 2.8 L8.1 5 Z M3.5 10 L5.8 12.2 L8.1 10 Z" fill="#111"/></svg>
<div class="a" style="left:842.3px;top:279.7px;width:8.4px;height:8px;border:1px solid #555;background:#fff"></div>
<svg class="a" style="left:842px;top:279px" width="11" height="11" viewBox="0 0 11 11"><path d="M2.5 5.5 L4.6 7.8 L8.8 2.8" fill="none" stroke="#333" stroke-width="1.1"/></svg>
<div class="a ui" style="left:855.9px;top:279.8px">Показать</div>
<div class="a" style="left:903.1px;top:278.3px;width:37.5px;height:10.3px;border:1px solid #adadad;background:#e1e1e1"></div>
<div class="a ui" style="left:910.8px;top:279.3px">N M Q</div>

<div class="a ui" style="left:750.3px;top:298.1px">АРМАТУРА продольная</div>

<!-- table 1 -->
<div class="a" style="left:749.6px;top:312.5px;width:193.5px;height:58.5px;border:1px solid #828790;background:#fff"></div>
<div class="a" style="left:789.5px;top:314.3px;width:1px;height:18.4px;background:#e6e6e6"></div>
<div class="a" style="left:828.3px;top:314.3px;width:1px;height:18.4px;background:#e6e6e6"></div>
<div class="a" style="left:867.2px;top:314.3px;width:1px;height:18.4px;background:#e6e6e6"></div>
<div class="a" style="left:905.5px;top:314.3px;width:1px;height:18.4px;background:#e6e6e6"></div>
<div class="a ui" style="left:756px;top:317.3px">Арма...</div>
<div class="a ui" style="left:800.3px;top:317.3px">AU1</div>
<div class="a ui" style="left:839.2px;top:317.3px">AU2</div>
<div class="a ui" style="left:878.1px;top:317.3px">AU3</div>
<div class="a ui" style="left:917px;top:317.3px">AU4</div>
<div class="a ui" style="left:756px;top:334.7px">ПЛН</div>
<div class="a ui" style="left:802px;top:334.7px">4.54</div>
<div class="a ui" style="left:841px;top:334.7px">4.54</div>
<div class="a ui" style="left:880px;top:334.7px">4.54</div>
<div class="a ui" style="left:919px;top:334.7px">4.54</div>
<div class="a ui" style="left:756px;top:348.2px">ПРЧН</div>
<div class="a ui" style="left:802px;top:348.2px">1.22</div>
<div class="a ui" style="left:841px;top:348.2px">1.22</div>
<div class="a ui" style="left:880px;top:348.2px">1.22</div>
<div class="a ui" style="left:919px;top:348.2px">1.22</div>

<!-- table 2 -->
<div class="a" style="left:749.6px;top:374.3px;width:193.5px;height:57.5px;border:1px solid #828790;background:#fff"></div>
<div class="a" style="left:782.9px;top:375.3px;width:1px;height:18.2px;background:#e6e6e6"></div>
<div class="a" style="left:815.4px;top:375.3px;width:1px;height:18.2px;background:#e6e6e6"></div>
<div class="a" style="left:847.3px;top:375.3px;width:1px;height:18.2px;background:#e6e6e6"></div>
<div class="a" style="left:880px;top:375.3px;width:1px;height:18.2px;background:#e6e6e6"></div>
<div class="a" style="left:912.6px;top:375.3px;width:1px;height:18.2px;background:#e6e6e6"></div>
<div class="a ui" style="left:755.7px;top:379px">Ар...</div>
<div class="a ui" style="left:790.6px;top:379px">AS1</div>
<div class="a ui" style="left:823.2px;top:379px">AS2</div>
<div class="a ui" style="left:855.5px;top:379px">AS3</div>
<div class="a ui" style="left:888.1px;top:379px">AS4</div>
<div class="a ui" style="left:925.3px;top:379px">%</div>
<div class="a ui" style="left:756px;top:395.5px">ПЛН</div>
<div class="a ui" style="left:921.5px;top:395.5px">1.42</div>
<div class="a ui" style="left:756px;top:409.3px">ПРЧН</div>
<div class="a ui" style="left:921.5px;top:409.3px">0.38</div>

<div class="a" style="left:751.3px;top:435.8px;width:194.7px;height:24px;border:1px solid #a9a9a9;background:#f0f0f0;box-shadow:inset 1px 1px 0 #fff"></div>

<div class="a ui" style="left:752.3px;top:466.8px">АРМАТУРА поперечная</div>
<div class="a ui" style="left:864.2px;top:466.8px">Ширина трещин</div>

<!-- table 3 -->
<div class="a" style="left:751.3px;top:482px;width:105.5px;height:50px;border:1px solid #828790;background:#fff"></div>
<div class="a" style="left:787.7px;top:484px;width:1px;height:18px;background:#e6e6e6"></div>
<div class="a" style="left:823.5px;top:484px;width:1px;height:18px;background:#e6e6e6"></div>
<div class="a ui" style="left:757.7px;top:487.3px">Шаг ...</div>
<div class="a ui" style="left:793px;top:487.3px">ASW1</div>
<div class="a ui" style="left:828.5px;top:487.3px">ASW2</div>
<div class="a ui" style="left:758px;top:503.5px">ПЛН</div>
<div class="a ui" style="left:831px;top:503.5px">0.116</div>

<!-- table 4 -->
<div class="a" style="left:863.3px;top:482px;width:81.9px;height:50px;border:1px solid #828790;background:#fff"></div>
<div class="a" style="left:905.8px;top:484px;width:1px;height:18px;background:#e6e6e6"></div>
<div class="a ui" style="left:870.3px;top:487.3px">Кратк...</div>
<div class="a ui" style="left:913.3px;top:487.3px">Длит...</div>
<div class="a ui" style="left:870.3px;top:503.5px">0.30</div>
<div class="a ui" style="left:918.7px;top:503.5px">0.30</div>

</body></html>
